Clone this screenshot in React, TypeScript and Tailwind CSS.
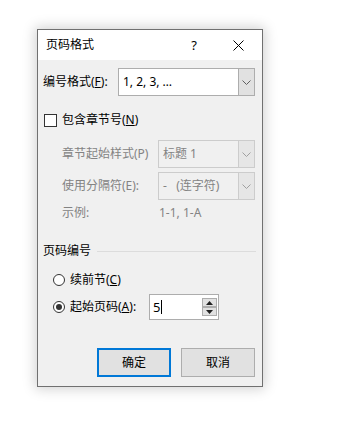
import React from "react";

const Chevron = ({ color = "#606060" }: { color?: string }) => (
  <svg width="9" height="5" viewBox="0 0 9 5">
    <path d="M0.5 0.5 L4.5 4.5 L8.5 0.5" fill="none" stroke={color} strokeWidth="1" />
  </svg>
);

const Combo = ({ value, disabled, w }: { value: string; disabled?: boolean; w: string }) => (
  <div
    className={`${w} h-[28px] flex border ${
      disabled ? "border-[#cccccc] bg-[#f0f0f0] text-[#838383]" : "border-[#adadad] bg-white text-black"
    }`}
  >
    <div className="flex-1 flex items-center pl-[4px] whitespace-pre">{value}</div>
    <div
      className={`w-[16px] flex items-center justify-center border-l ${
        disabled ? "border-[#cccccc] bg-[#e6e6e6]" : "border-[#adadad] bg-[#e1e1e1]"
      }`}
    >
      <Chevron color={disabled ? "#a0a0a0" : "#606060"} />
    </div>
  </div>
);

const SpinBtn = ({ up }: { up?: boolean }) => (
  <div className="w-[15px] h-[9px] border border-[#adadad] bg-[#e1e1e1] flex items-center justify-center">
    <svg width="7" height="4" viewBox="0 0 7 4">
      <path d={up ? "M0 4 L3.5 0 L7 4 Z" : "M0 0 L3.5 4 L7 0 Z"} fill="#202020" />
    </svg>
  </div>
);

export default function App() {
  return (
    <div
      className="w-[340px] h-[442px] bg-white pt-[29px] pl-[37px] text-[12px] leading-none"
      style={{ fontFamily: '"Noto Sans", "Noto Sans CJK SC", sans-serif' }}
    >
      <div className="w-[226px] h-[358px] border border-[#707070] flex flex-col shadow-[0_0_12px_2px_rgba(0,0,0,0.18)]">
        {/* title bar */}
        <div className="h-[30px] bg-white flex items-center pl-[8px] text-black">
          <span className="flex-1">页码格式</span>
          <span className="w-[12px] text-center mr-[33px] text-[13px]">?</span>
          <svg width="11" height="11" viewBox="0 0 11 11" className="mr-[18px]">
            <path d="M0.5 0.5 L10.5 10.5 M10.5 0.5 L0.5 10.5" stroke="#000" strokeWidth="1" />
          </svg>
        </div>

        {/* body */}
        <div className="flex-1 bg-[#f0f0f0] pl-[5px] pr-[7px] flex flex-col text-black">
          <div className="mt-[8px] h-[28px] flex items-center justify-between">
            <span>
              编号格式(<span className="underline">F</span>):
            </span>
            <Combo value="1, 2, 3, …" w="w-[137px]" />
          </div>

          <div className="mt-[16px] h-[16px] flex items-center gap-[5px] pl-[1px]">
            <div className="w-[13px] h-[13px] border border-[#333333] bg-white" />
            <span>
              包含章节号(<span className="underline">N</span>)
            </span>
          </div>

          <div className="mt-[12px] h-[28px] flex items-center justify-between pl-[19px] text-[#838383]">
            <span>章节起始样式(P)</span>
            <Combo value="标题 1" disabled w="w-[97px]" />
          </div>

          <div className="mt-[4px] h-[28px] flex items-center justify-between pl-[19px] text-[#838383]">
            <span>使用分隔符(E):</span>
            <Combo value="-   (连字符)" disabled w="w-[97px]" />
          </div>

          <div className="mt-[5px] h-[16px] flex items-center pl-[19px] text-[#838383]">
            <span className="w-[97px]">示例:</span>
            <span>1-1, 1-A</span>
          </div>

          <div className="mt-[22px] h-[16px] flex items-center gap-[6px]">
            <span>页码编号</span>
            <div className="flex-1 h-px bg-[#dcdcdc] mr-[-1px]" />
          </div>

          <div className="mt-[13px] h-[16px] flex items-center pl-[10px] gap-[5px]">
            <div className="w-[12px] h-[12px] rounded-full border border-[#333333] bg-white" />
            <span>
              续前节(<span className="underline">C</span>)
            </span>
          </div>

          <div className="mt-[6px] h-[26px] flex items-center pl-[10px]">
            <div className="w-[12px] h-[12px] rounded-full border border-[#333333] bg-white flex items-center justify-center">
              <div className="w-[6px] h-[6px] rounded-full bg-[#333333]" />
            </div>
            <span className="ml-[5px] w-[79px]">
              起始页码(<span className="underline">A</span>):
            </span>
            <div className="w-[70px] h-[26px] border border-[#adadad] bg-white flex items-center">
              <div className="flex-1 flex items-center pl-[3px] text-[13px]">
                5<span className="w-px h-[14px] bg-black ml-[1px]" />
              </div>
              <div className="flex flex-col mr-[1px]">
                <SpinBtn up />
                <SpinBtn />
              </div>
            </div>
          </div>

          <div className="mt-[28px] flex justify-end gap-[10px]">
            <button className="w-[74px] h-[29px] border-2 border-[#0078d7] bg-[#e1e1e1] text-black">确定</button>
            <button className="w-[74px] h-[29px] border border-[#adadad] bg-[#e1e1e1] text-black">取消</button>
          </div>
        </div>
      </div>
    </div>
  );
}
